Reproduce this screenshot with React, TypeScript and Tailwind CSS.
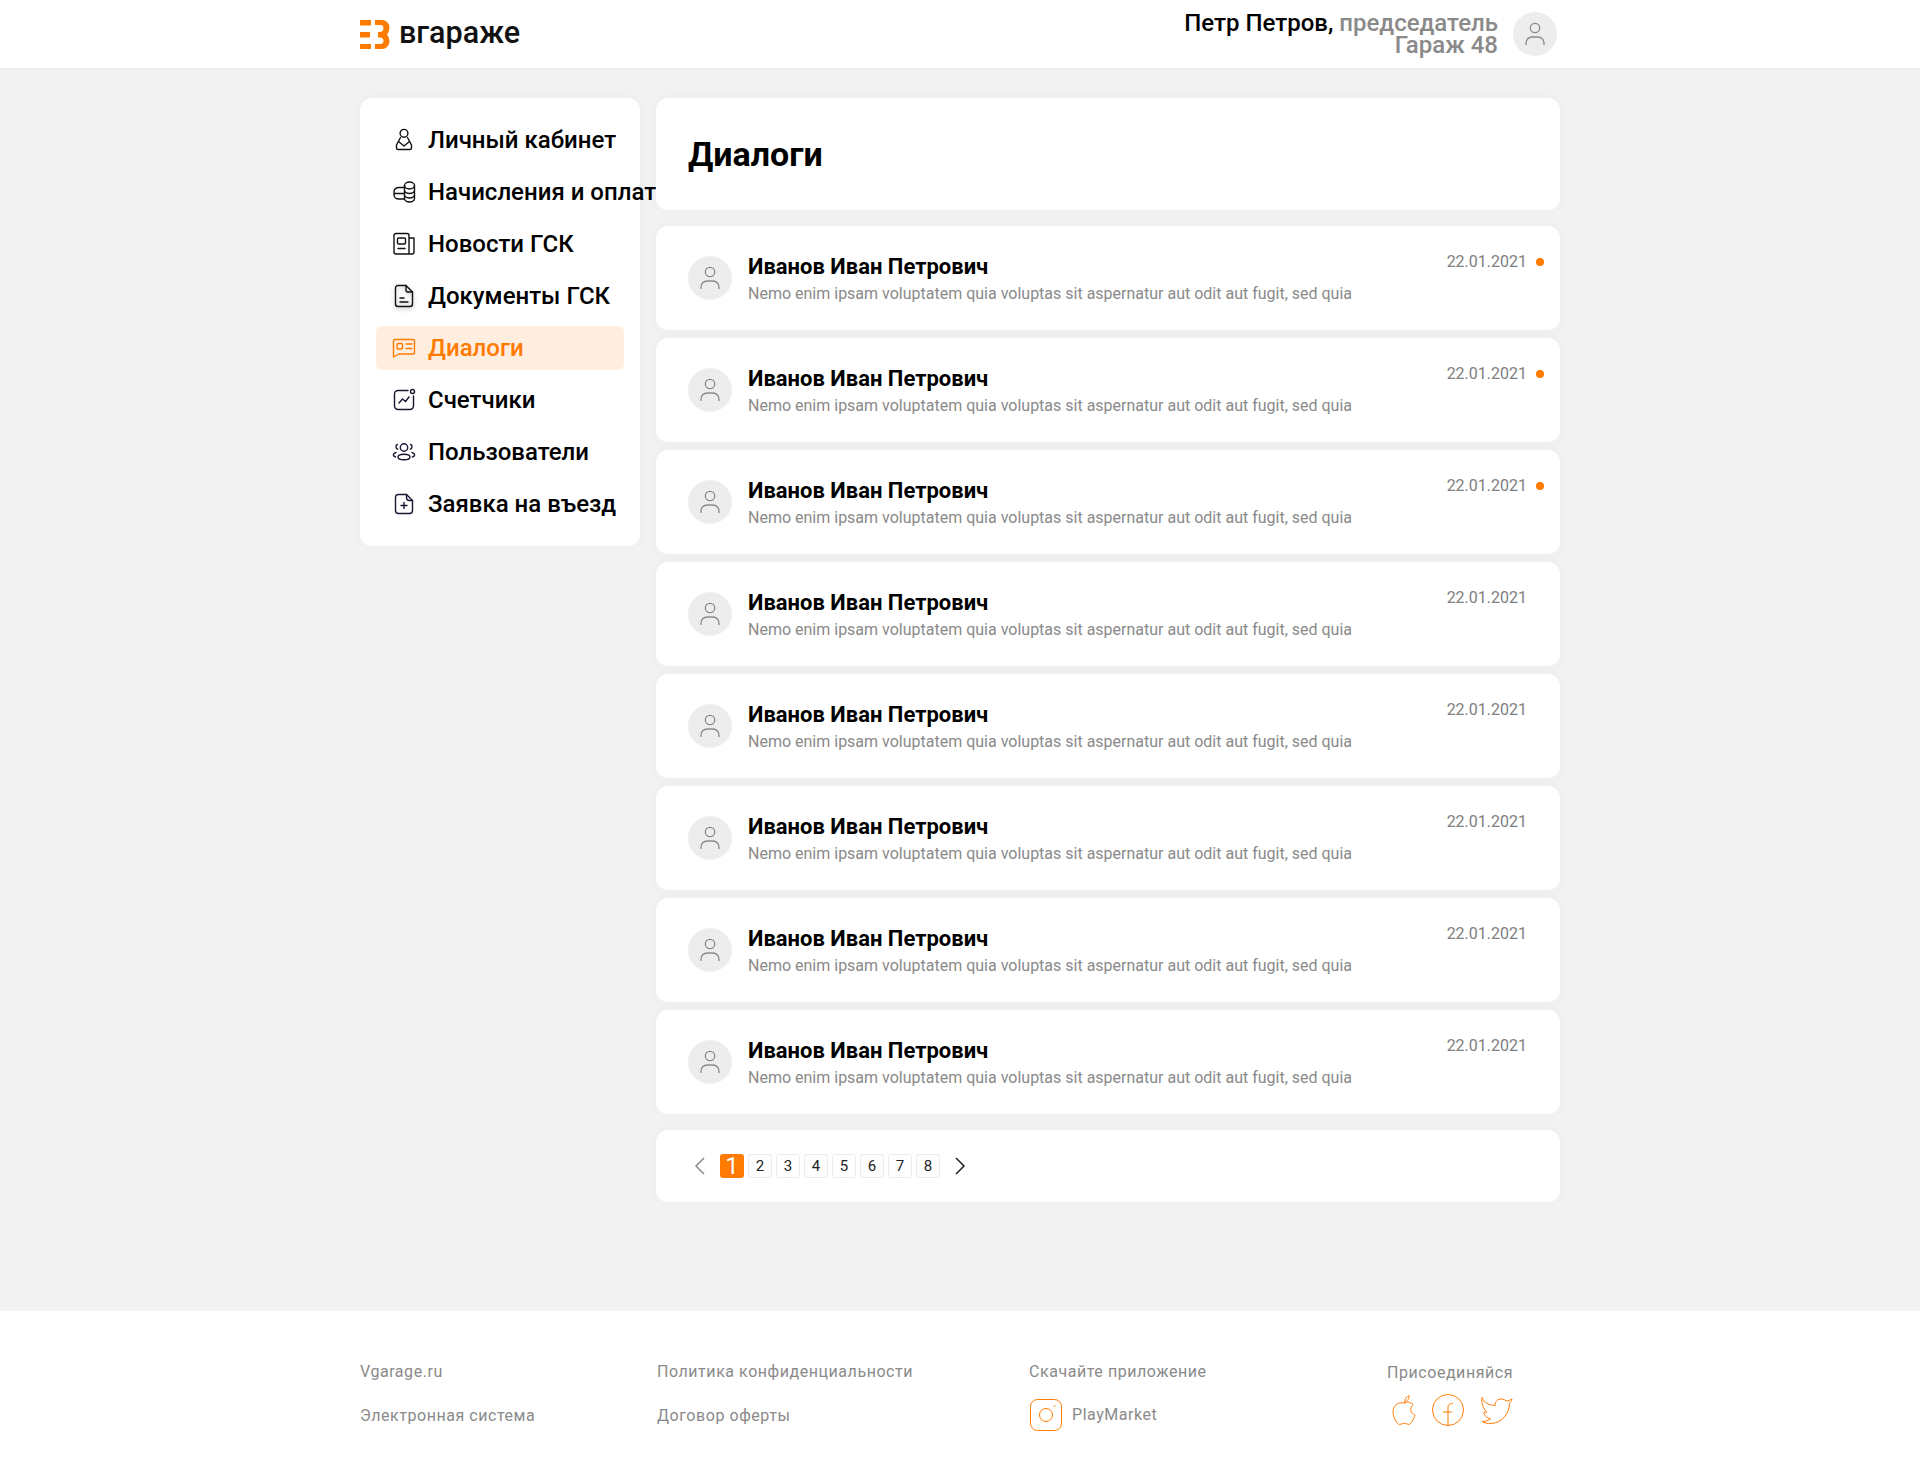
import React from "react";

const I = ({ children, c = "#1d1431", cls = "" }: { children: React.ReactNode; c?: string; cls?: string }) => (
  <svg width="24" height="24" viewBox="0 0 24 24" fill="none" stroke={c} strokeWidth="1.4" strokeLinecap="round" strokeLinejoin="round" className={`shrink-0 ${cls}`}>
    {children}
  </svg>
);

const nav: { t: string; a?: boolean; i: React.ReactNode }[] = [
  { t: "Личный кабинет", i: <I c="#111"><circle cx="12" cy="5.300" r="3.900" /><path d="M8.500 9.500 4.500 17v3a1.500 1.500 0 0 0 1.500 1.500h12a1.500 1.500 0 0 0 1.500-1.500v-3l-4-7.500" /><path d="M6.500 13.500 12 18l5.500-4.500" /></I> },
  { t: "Начисления и оплаты", i: <I c="#111"><ellipse cx="17.500" cy="5.500" rx="5" ry="3.500" /><path d="M12.500 5.500V18.500c0 1.900 2.200 3.500 5 3.500s5-1.600 5-3.500V5.500M12.500 10c0 1.900 2.200 3.500 5 3.500s5-1.600 5-3.500M12.500 14.500c0 1.900 2.200 3.500 5 3.500s5-1.600 5-3.500" /><path d="M12.500 7.500H7A5 4 0 0 0 2 11.500v3.500a5 4 0 0 0 5 4h5.500M2.500 13.500h10" /></I> },
  { t: "Новости ГСК", i: <I c="#111"><path d="M17 22H4a2 2 0 0 1-2-2V3.500A2 2 0 0 1 4 1.500h11a2 2 0 0 1 2 2V22Zm0 0h3a2 2 0 0 0 2-2V6h-5" /><rect x="5.500" y="6" width="8" height="6" rx="1" /><path d="M6 16.500h7" /></I> },
  { t: "Документы ГСК", i: <I c="#111" cls="drop-shadow-[0_2px_2px_rgba(0,0,0,0.25)]"><path d="M14 1.500H6a2.500 2.500 0 0 0-2.500 2.500v16A2.500 2.500 0 0 0 6 22.500h12a2.500 2.500 0 0 0 2.500-2.500V8L14 1.500Z" /><path d="M14 1.500V6a2 2 0 0 0 2 2h4.500M8 14h4M8 18h8" /></I> },
  { t: "Диалоги", a: true, i: <I c="#ff7a00"><path d="M1.500 5A1.500 1.500 0 0 1 3 3.500h18A1.500 1.500 0 0 1 22.500 5v11.500A1.500 1.500 0 0 1 21 18H7l-5.500 3V5Z" /><rect x="5" y="7.500" width="5.500" height="5.500" rx="1" /><path d="M14 8h6M14 12.500h6" /></I> },
  { t: "Счетчики", i: <I><path d="M16 2.500H6a3.500 3.500 0 0 0-3.500 3.500v12A3.500 3.500 0 0 0 6 21.500h12a3.500 3.500 0 0 0 3.500-3.500V8" /><circle cx="20.500" cy="3.500" r="2" /><path d="m7 15 3.500-4 3 2.500L17 9" /></I> },
  { t: "Пользователи", i: <I><circle cx="12" cy="7.500" r="3.700" /><path d="M5.500 4.500C3.500 5 3.500 8.500 5.500 9M18.500 4.500c2 .5 2 4 0 4.500" /><ellipse cx="12" cy="17" rx="6" ry="2.800" /><path d="M4 12.500c-3.500 1-3.500 3.500-.5 4.500M20 12.500c3.500 1 3.500 3.500.5 4.500" /></I> },
  { t: "Заявка на въезд", i: <I><path d="M14.500 2.500H6.500A3 3 0 0 0 3.500 5.500v13a3 3 0 0 0 3 3h11a3 3 0 0 0 3-3V8.500L14.500 2.500Z" /><path d="M14.500 2.500v3a3 3 0 0 0 3 3h3M12 10.500v6M9 13.500h6" /></I> },
];

const Avatar = () => (
  <div className="flex h-[44px] w-[44px] shrink-0 items-center justify-center rounded-full bg-[#ededed]">
    <svg width="24" height="24" viewBox="0 0 24 24" fill="none" stroke="#8a8a8a" strokeWidth="1.300">
      <circle cx="12" cy="6" r="4.700" />
      <path d="M3 23v-2a6 6 0 0 1 6-6h6a6 6 0 0 1 6 6v2" />
    </svg>
  </div>
);

const cardCls = "rounded-[12px] bg-white shadow-[0_0_12px_rgba(0,0,0,0.03)]";

const Row = ({ dot }: { dot: boolean }) => (
  <div className={`${cardCls} flex h-[104px] pl-[32px] pr-[16px]`}>
    <div className="mt-[30px]"><Avatar /></div>
    <div className="ml-[16px] mt-[27px] min-w-0 flex-1">
      <div className="text-[22px] font-bold leading-[28px] text-black">Иванов Иван Петрович</div>
      <div className="mt-[1px] text-[16px] leading-[24px] text-[#8a8a8a]">Nemo enim ipsam voluptatem quia voluptas sit aspernatur aut odit aut fugit, sed quia</div>
    </div>
    <div className="mt-[24px] flex h-[24px] items-center">
      <span className="text-[16px] leading-[24px] text-[#808080]">22.01.2021</span>
      <span className={`ml-[9px] h-[8px] w-[8px] rounded-full ${dot ? "bg-[#ff7a00]" : "bg-transparent"}`} />
    </div>
  </div>
);

export default function App() {
  return (
    <div className="flex min-h-[1468px] flex-col bg-[#f2f2f2] font-['Roboto',sans-serif]">
      <header className="h-[68px] bg-white shadow-[0_1px_3px_rgba(0,0,0,0.04)]">
        <div className="mx-auto flex h-full w-[1200px] items-center justify-between pr-[3px]">
          <div className="flex items-center">
            <svg width="30" height="29" viewBox="0 0 30 29" fill="#ff7a00">
              <rect x="0" y="0" width="11" height="5.500" />
              <rect x="0" y="12" width="10" height="5.500" />
              <rect x="0" y="24" width="11" height="5" />
              <path d="M15 0H22A7.500 7.500 0 0 1 29.500 7.500C29.500 10 28.500 12.500 27 14.500C28.500 16.500 29.500 19 29.500 21.500A7.500 7.500 0 0 1 22 29H15V24H20C22 24 23.500 23 23.500 21C23.500 19 22 17.500 20 17.500H18V12H20C22 12 23.500 10 23.500 8C23.500 6 22 5 20 5H15Z" />
            </svg>
            <span className="ml-[9px] -translate-y-px text-[30.500px] font-medium leading-none text-[#111]">вгараже</span>
          </div>
          <div className="flex items-center">
            <div className="text-right text-[24px] font-medium leading-[22px] text-[#8a8a8a]">
              <div className="whitespace-nowrap"><span className="text-black">Петр Петров,</span> председатель</div>
              <div>Гараж 48</div>
            </div>
            <div className="ml-[15px]"><Avatar /></div>
          </div>
        </div>
      </header>

      <div className="mx-auto mt-[30px] flex w-[1200px] flex-1 items-start gap-[16px]">
        <aside className={`${cardCls} h-[448px] w-[280px] shrink-0 px-[16px] pt-[20px]`}>
          {nav.map((n) => (
            <div key={n.t} className={`mb-[8px] flex h-[44px] items-center whitespace-nowrap rounded-[6px] pl-[16px] text-[24px] font-medium ${n.a ? "bg-[#ffeee0] text-[#ff7a00]" : "text-black"}`}>
              {n.i}
              <span className="ml-[12px]">{n.t}</span>
            </div>
          ))}
        </aside>
        <main className="relative z-10 flex w-[904px] flex-col">
          <div className={`${cardCls} flex h-[112px] items-center pl-[32px]`}>
            <h1 className="text-[34px] font-bold leading-none text-black">Диалоги</h1>
          </div>
          <div className="mt-[16px] flex flex-col gap-[8px]">
            {[0, 1, 2, 3, 4, 5, 6, 7].map((i) => <Row key={i} dot={i < 3} />)}
          </div>
          <div className={`${cardCls} mt-[16px] flex h-[72px] items-center pl-[36px]`}>
            <svg width="16" height="24" viewBox="0 0 16 24" fill="none" stroke="#8a8a8a" strokeWidth="1.500"><path d="M12 4 4 12l8 8" /></svg>
            <div className="ml-[12px] flex gap-[4px]">
              {[1, 2, 3, 4, 5, 6, 7, 8].map((p) => (
                <div key={p} className={p === 1 ? "flex h-[24px] w-[24px] items-center justify-center rounded-[3px] bg-[#ff7a00] text-[24px] font-normal text-white" : "flex h-[24px] w-[24px] items-center justify-center rounded-[3px] border border-[#ececec] text-[15px] text-[#222]"}>{p}</div>
              ))}
            </div>
            <svg className="ml-[12px]" width="16" height="24" viewBox="0 0 16 24" fill="none" stroke="#222" strokeWidth="1.500"><path d="m4 4 8 8-8 8" /></svg>
          </div>
        </main>
      </div>

      <footer className="h-[157px] bg-white">
        <div className="mx-auto flex w-[1200px] pt-[49px] text-[16px] leading-[24px] tracking-[0.55px] text-[#8a8a8a]">
          <div className="w-[297px]">
            <div>Vgarage.ru</div>
            <div className="mt-[20px]">Электронная система</div>
          </div>
          <div className="w-[372px]">
            <div>Политика конфиденциальности</div>
            <div className="mt-[20px]">Договор оферты</div>
          </div>
          <div className="w-[358px]">
            <div>Скачайте приложение</div>
            <div className="mt-[15px] flex items-center">
              <svg className="ml-px" width="32" height="32" viewBox="0 0 32 32" fill="none" stroke="#ff7a00" strokeWidth="1"><rect x=".5" y=".5" width="31" height="31" rx="7" /><circle cx="16" cy="16" r="6.500" /><path d="M23.500 7h2" /></svg>
              <span className="ml-[10px]">PlayMarket</span>
            </div>
          </div>
          <div className="pt-px">
            <div>Присоединяйся</div>
            <div className="ml-[5px] mt-[9px] flex items-center">
              <svg width="25" height="32" viewBox="0 0 26 32" fill="none" stroke="#ff7a00" strokeWidth="1"><path d="M13 9c2-1.500 6-2 9 1.500-4 3-3 9 2 11-1 3-4 9.500-6.500 9.500-2 0-3-1.200-4.500-1.200S10 31 8 31c-3 0-7-8-7-13 0-8 8-11 12-9Z" /><path d="M13 8c0-3 2-6 5-7 0 3-2 6-5 7Z" /></svg>
              <svg className="ml-[15px]" width="32" height="32" viewBox="0 0 32 32" fill="none" stroke="#ff7a00" strokeWidth="1"><circle cx="16" cy="16" r="15.500" /><path d="M16 31.500V14c0-3 1-4.500 5-4.500M11 18h9" /></svg>
              <svg className="ml-[17px]" width="32" height="28" viewBox="0 0 32 28" fill="none" stroke="#ff7a00" strokeWidth="1"><path d="M1 1.500c2 5 6 7.500 13 8 0-4 3-7 6.500-6.500 2 0 3.500 1 4.500 2 2 0 4-1 6-2-.5 2-1.500 3-2.500 4.500 0 9-7 20-19 20-3 0-6-.5-8.500-2 3 0 6-1 8.500-2.500C4 21 3 18 3 16c1 .5 2 .5 3 0C2 13 0 6 1 1.500Z" /></svg>
            </div>
          </div>
        </div>
      </footer>
    </div>
  );
}
